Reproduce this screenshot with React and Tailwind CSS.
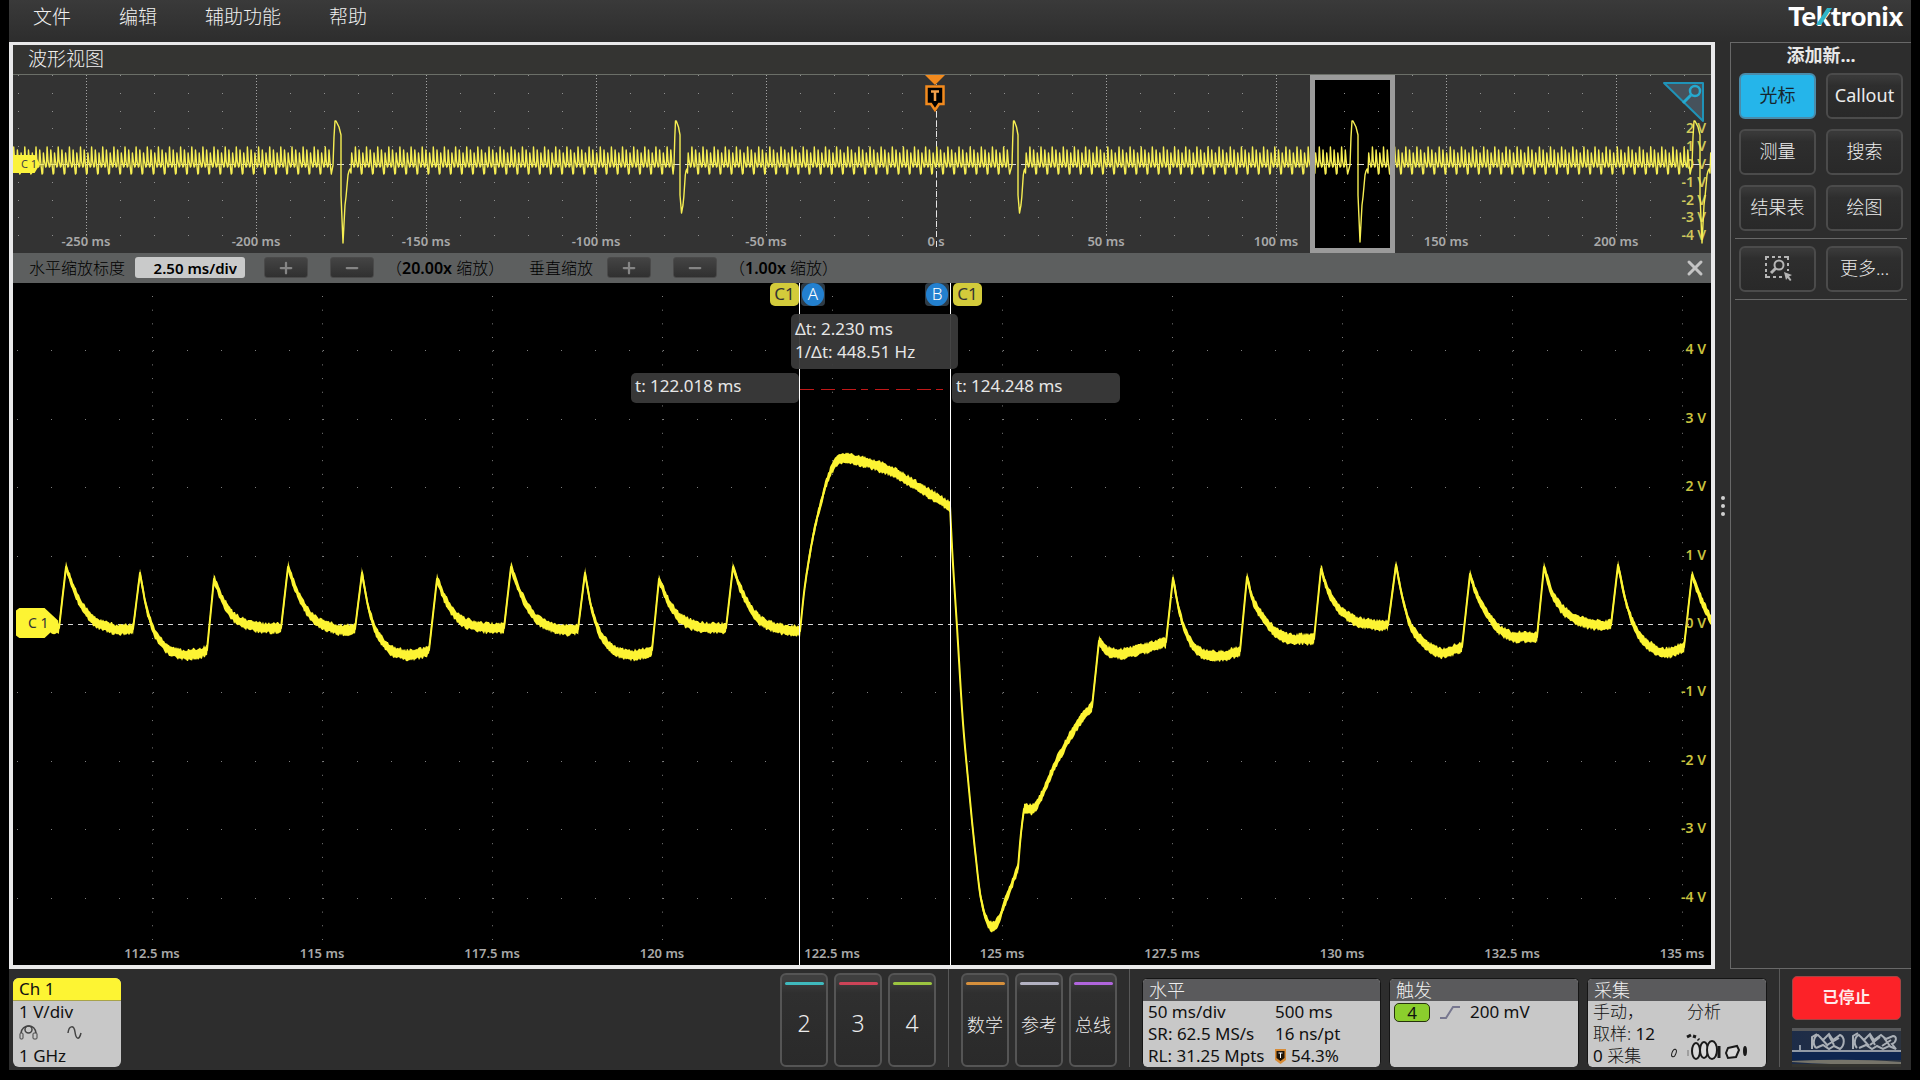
import React from "react";
import { Plus, Minus, X } from "lucide-react";

const PLOT_W = 1698;
const OVERVIEW_H = 178;
const ZOOM_H = 682;

const pctX = (x) => `${(x / PLOT_W) * 100}%`;
const pctY = (y, h) => `${(y / h) * 100}%`;

// smooth curve through a list of points, sampled once per pixel
const sample = (pts) => {
  const n = pts.length;
  const d = [];
  for (let i = 0; i < n - 1; i++) {
    d.push((pts[i + 1][1] - pts[i][1]) / (pts[i + 1][0] - pts[i][0]));
  }
  const m = pts.map((_, i) => {
    if (i === 0) return d[0];
    if (i === n - 1) return d[n - 2];
    if (d[i - 1] * d[i] <= 0) return 0;
    return (2 * d[i - 1] * d[i]) / (d[i - 1] + d[i]);
  });
  const out = [];
  for (let i = 0; i < n - 1; i++) {
    const [x0, y0] = pts[i];
    const [x1, y1] = pts[i + 1];
    const h = x1 - x0;
    for (let x = x0; x < x1; x += 1) {
      const t = (x - x0) / h;
      const t2 = t * t;
      const t3 = t2 * t;
      out.push([
        x,
        (2 * t3 - 3 * t2 + 1) * y0 + (t3 - 2 * t2 + t) * h * m[i] + (-2 * t3 + 3 * t2) * y1 + (t3 - t2) * h * m[i + 1],
      ]);
    }
  }
  out.push(pts[n - 1]);
  return out;
};

// decay shapes after each peak: [dx, y]
const decays = [
  [[0, 284], [7, 304], [15, 321], [28, 338], [41, 344], [54, 347], [67, 346]],
  [[0, 290], [7, 327], [17, 354], [33, 369], [47, 372], [60, 370], [67, 367]],
  [[0, 296], [9, 318], [22, 336], [38, 343], [52, 345], [67, 345]],
];

const segments = [[[35, 345], [46, 345]]];
let last = [46, 345];
for (let k = 0; k < 10; k++) {
  const px = Math.round(52.5 + k * 74.2);
  const seg = decays[k % 3].map(([dx, y]) => [px + dx, y]);
  segments.push([last, [px, seg[0][1]]], seg);
  last = seg[seg.length - 1];
}
last = [787, 348];
segments[segments.length - 1].pop();
segments[segments.length - 1].push(last);

const tail = [
  [[787, 348], [792, 302], [802, 244], [809, 216], [815, 195], [822, 181], [829, 175], [847, 178], [875, 187], [904, 203], [937, 223]],
  [[937, 223], [939, 264], [944, 344], [950, 440], [955, 496], [962, 567], [968, 616], [974, 638], [979, 644], [984, 640], [992, 619], [1005, 585]],
  [[1005, 585], [1008, 550], [1011, 526]],
  [[1011, 526], [1019, 526], [1029, 512], [1040, 486], [1057, 454], [1069, 435], [1079, 424]],
  [[1079, 424], [1086, 358]],
  [[1086, 358], [1094, 368], [1105, 371], [1130, 366], [1153, 359]],
  [[1153, 359], [1160, 295]],
  [[1160, 295], [1166, 327], [1173, 350], [1181, 364], [1194, 372], [1207, 373], [1227, 368]],
  [[1227, 368], [1234, 294]],
  [[1234, 294], [1240, 317], [1251, 336], [1264, 350], [1279, 356], [1301, 356]],
  [[1301, 356], [1308, 286]],
  [[1308, 286], [1316, 310], [1329, 329], [1346, 339], [1364, 342], [1375, 342]],
  [[1375, 342], [1383, 282]],
  [[1383, 282], [1390, 317], [1398, 344], [1411, 360], [1429, 370], [1449, 364]],
  [[1449, 364], [1457, 291]],
  [[1457, 291], [1463, 310], [1474, 331], [1487, 347], [1502, 354], [1524, 354]],
  [[1524, 354], [1531, 284]],
  [[1531, 284], [1539, 310], [1552, 329], [1567, 338], [1585, 342], [1598, 342]],
  [[1598, 342], [1605, 282]],
  [[1605, 282], [1613, 319], [1622, 345], [1635, 362], [1652, 370], [1671, 364]],
  [[1671, 364], [1679, 292]],
  [[1679, 292], [1687, 314], [1698, 337]],
];

const trace = [...segments, ...tail].flatMap(sample);

const noise = (i) => {
  const s = Math.sin(i * 127.1) * 43758.5453;
  return s - Math.floor(s);
};

const line = (pts) => "M" + pts.map(([x, y]) => `${x.toFixed(1)} ${y.toFixed(1)}`).join("L");

const band =
  line(trace.map(([x, y], i) => [x, y - 3.5 - noise(i) * 3])) +
  "L" +
  line(trace.map(([x, y], i) => [x, y + 3.5 + noise(i + 500) * 3]).reverse()).slice(1) +
  "Z";

// compressed record: short teeth broken by the large pulses [start, bottom, width factor]
const pulses = [
  [320, 168, 1],
  [661, 138, 0.75],
  [999, 138, 0.75],
  [1337, 167, 1],
  [1679, 168, 1],
];

const pulseShape = [[0, 90], [1, 62], [2, 46], [3, 46], [6, 52], [8, 60], [8, 120], [10, null], [12, 130], [13, 122], [15, 100], [16, 96], [17, 94]];

const overviewTrace = () => {
  const pts = [];
  let x = 0;
  let k = 0;
  let p = 0;
  while (x < PLOT_W) {
    if (p < pulses.length && x >= pulses[p][0] - 2) {
      const [s, bottom, f] = pulses[p];
      pulseShape.forEach(([dx, y]) => pts.push([s + dx * f, y === null ? bottom : Math.min(y, bottom)]));
      x = s + 18 * f;
      p += 1;
      continue;
    }
    const low = k % 3 === 1 ? 99 : 92;
    pts.push([x, k % 3 === 2 ? 98 : 91], [x + 0.7, 72 + (k % 3) * 3], [x + 1.6, 86], [x + 3, low]);
    x += 3.71;
    k += 1;
  }
  return line(pts);
};

const range = (a, b) => Array.from({ length: b - a + 1 }, (_, i) => a + i);

const OverviewPlot = () => (
  <svg className="block h-full w-full" viewBox={`0 0 ${PLOT_W} ${OVERVIEW_H}`} preserveAspectRatio="none" aria-hidden="true">
    <rect x="1300" y="3" width="80" height="172" fill="#000" />
    <g stroke="#8f8f8f" strokeWidth="1">
      {range(0, 9).map((i) => (
        <path key={i} d={`M5 ${0.5 + Math.round(i * 17.8)}H${PLOT_W}`} strokeDasharray="1 33" />
      ))}
      {range(0, 9).map((i) => (
        <path key={i} d={`M${73.5 + i * 170} 0V162`} stroke="#a5a5a5" strokeDasharray="1 2" />
      ))}
    </g>
    <path d={`M0 89.5H${PLOT_W}`} stroke="#d8d8d8" strokeDasharray="7 5" />
    <path d="M923.5 36V172" stroke="#e5e5e5" strokeDasharray="6 4" />
    <path d={overviewTrace()} fill="none" stroke="#f6ee52" strokeWidth="1.4" strokeLinejoin="round" />
    <rect x="1299.5" y="2.5" width="80" height="173" fill="none" stroke="#9b9b9b" strokeWidth="5" />
  </svg>
);

const ZoomPlot = () => (
  <svg className="block h-full w-full" viewBox={`0 0 ${PLOT_W} ${ZOOM_H}`} preserveAspectRatio="none" aria-hidden="true">
    <g stroke="#7d7d7d" strokeWidth="1">
      {range(-4, 4)
        .filter((v) => v !== 0)
        .map((v) => (
          <path key={v} d={`M4 ${Math.round(341 - v * 68.4) + 0.5}H1690`} strokeDasharray="1 33" />
        ))}
      {range(0, 9).map((i) => (
        <path key={i} d={`M${139.5 + i * 170} 13V660`} strokeDasharray="1 12.68" />
      ))}
    </g>
    <path d="M45 341.5H1676" stroke="#d6d6d6" strokeDasharray="5 5" />
    <path d="M787 106.5H934" stroke="#c01818" strokeDasharray="14 7 14 7 14 5 7 7" />
    <path d={band} fill="#fdf433" />
    <path d={line(trace)} fill="none" stroke="#fdf433" strokeWidth="2" strokeLinejoin="round" />
    <path d={`M786.5 0V${ZOOM_H}M937.5 0V${ZOOM_H}`} stroke="#fff" />
  </svg>
);

const TimeLabel = ({ x, y, children }) => (
  <span
    className="absolute -translate-x-1/2 -translate-y-1/2 whitespace-nowrap text-[13px] leading-4 font-semibold text-[#a9a9a9]"
    style={{ left: pctX(x), top: y }}
  >
    {children}
  </span>
);

const TriggerMark = ({ className }) => (
  <svg className={className} viewBox="0 0 20 37" aria-hidden="true">
    <path d="M0 0H20L10 10Z" fill="#f28a1e" />
    <path d="M1.5 11.5H18.5V29H14L10 35L6 29H1.5Z" fill="#000" stroke="#f28a1e" strokeWidth="2.5" />
    <path d="M6 16.5H14M10 16.5V26" stroke="#f2a04a" strokeWidth="2.5" />
  </svg>
);

const MenuBar = () => (
  <header className="flex h-[42px] shrink-0 items-start justify-between bg-linear-to-b from-[#3a3a3a] to-[#2d2d2d] pr-2 pl-6">
    <nav className="flex gap-12 pt-1">
      {["文件", "编辑", "辅助功能", "帮助"].map((m) => (
        <button key={m} type="button" className="text-[19px] leading-[26px] font-light text-[#f0f0f0]">
          {m}
        </button>
      ))}
    </nav>
    <div className="font-[Lato,sans-serif] text-[27px] leading-8 font-black text-white">
      Te
      <span className="relative">
        k
        <svg className="absolute top-[6px] left-0 h-[20px] w-[16px]" viewBox="0 0 16 20" aria-hidden="true">
          <path d="M11 3H16L5 20H0Z" fill="#2fb5c8" />
        </svg>
      </span>
      tronix
    </div>
  </header>
);

const ZoomButton = ({ label, children }) => (
  <button
    type="button"
    aria-label={label}
    className="flex h-[21px] w-11 items-center justify-center rounded-[3px] border border-[#4a4a4a] bg-linear-to-b from-[#444] to-[#303030] text-[#858585]"
  >
    {children}
  </button>
);

const ZoomBar = () => (
  <div className="flex h-[30px] shrink-0 items-center bg-[#5d5f5f] pb-px pl-4 text-[16px] leading-5 text-black">
    <label htmlFor="hscale" className="font-light">
      水平缩放标度
    </label>
    <input
      id="hscale"
      readOnly
      value="2.50 ms/div"
      className="ml-[10px] h-[21px] w-[110px] rounded-[3px] bg-[#c9caca] pr-2 text-right text-[15px] font-semibold"
    />
    <div className="ml-[19px] flex gap-[22px]">
      <ZoomButton label="水平放大"><Plus size={18} strokeWidth={3} /></ZoomButton>
      <ZoomButton label="水平缩小"><Minus size={18} strokeWidth={3} /></ZoomButton>
    </div>
    <span className="ml-3 w-[143px] font-light whitespace-nowrap">
      （<b className="font-semibold">20.00x</b> 缩放）
    </span>
    <span className="font-light">垂直缩放</span>
    <div className="ml-[14px] flex gap-[22px]">
      <ZoomButton label="垂直放大"><Plus size={18} strokeWidth={3} /></ZoomButton>
      <ZoomButton label="垂直缩小"><Minus size={18} strokeWidth={3} /></ZoomButton>
    </div>
    <span className="ml-3 font-light whitespace-nowrap">
      （<b className="font-semibold">1.00x</b> 缩放）
    </span>
    <button type="button" aria-label="关闭" className="mr-1 ml-auto text-[#c4c4c4]">
      <X size={24} strokeWidth={3} />
    </button>
  </div>
);

const Overview = () => (
  <div className="relative h-[178px] shrink-0 overflow-hidden bg-[#333]">
    <div className="absolute inset-0 text-[14px] leading-[18px] font-semibold text-[#d0c85a]">
      {[2, 1, 0, -1, -2, -3, -4].map((v) => (
        <span
          key={v}
          className="absolute right-[5px] flex w-7 -translate-y-1/2 justify-between"
          style={{ top: pctY(89 - v * 17.8, OVERVIEW_H) }}
        >
          <span className="w-4 text-right">{v}</span>
          <span>V</span>
        </span>
      ))}
    </div>
    <div className="absolute inset-0">
      <OverviewPlot />
    </div>
    {["-250 ms", "-200 ms", "-150 ms", "-100 ms", "-50 ms", "0 s", "50 ms", "100 ms", "150 ms", "200 ms"].map((t, i) => (
      <TimeLabel key={t} x={73 + i * 170} y={166}>
        {t}
      </TimeLabel>
    ))}
    <span className="absolute top-[80px] left-0 flex h-[18px] w-[27px] items-center bg-[#fbf23c] pl-2 text-[11px] leading-3 whitespace-nowrap text-[#444] [clip-path:polygon(0_0,80%_0,100%_50%,80%_100%,0_100%)]">
      C 1
    </span>
    <div className="absolute top-0 -translate-x-1/2" style={{ left: pctX(922) }}>
      <TriggerMark className="h-[37px] w-5" />
    </div>
    <svg className="absolute top-[6px] right-[5px] h-[43px] w-[45px]" viewBox="0 0 45 43" aria-hidden="true">
      <path d="M3 2H42V40Z" fill="#46525c" stroke="#1f93b8" strokeWidth="2" strokeLinejoin="round" />
      <circle cx="34" cy="10" r="5" fill="none" stroke="#25a9cf" strokeWidth="2.5" />
      <path d="M30 14L22 22" stroke="#25a9cf" strokeWidth="3" />
    </svg>
  </div>
);

const CursorReadout = ({ className, children, ...rest }) => (
  <div
    className={`absolute rounded-[5px] bg-[#3a3a3a]/95 text-[17px] leading-[23px] whitespace-nowrap text-[#e6e6e6] ${className}`}
    {...rest}
  >
    {children}
  </div>
);

const SourceTag = () => (
  <span className="flex h-[23px] w-[29px] items-center justify-center rounded-[5px] bg-[#d3cb3b] pb-[2px] text-[17px] leading-5 text-[#333]">C1</span>
);

const CursorTag = ({ children }) => (
  <span className="flex h-[23px] w-6 items-center justify-center rounded-[4px] bg-[#2f3c47]">
    <span className="flex h-[23px] w-[22px] items-center justify-center rounded-full bg-[#2380cf] pb-px text-[17px] leading-5 font-light text-white">{children}</span>
  </span>
);

const ZoomView = () => (
  <div className="relative min-h-0 flex-1 overflow-hidden bg-black">
    <div className="absolute inset-0">
      <ZoomPlot />
    </div>
    {[4, 3, 2, 1, 0, -1, -2, -3, -4].map((v) => (
      <span
        key={v}
        className="absolute right-[5px] -translate-y-1/2 text-[14px] leading-4 font-semibold text-[#c9c23e]"
        style={{ top: pctY(340 - v * 68.4, ZOOM_H) }}
      >
        {v} V
      </span>
    ))}
    {["112.5 ms", "115 ms", "117.5 ms", "120 ms", "122.5 ms", "125 ms", "127.5 ms", "130 ms", "132.5 ms", "135 ms"].map((t, i) => (
      <TimeLabel key={t} x={139 + i * 170} y={pctY(670, ZOOM_H)}>
        {t}
      </TimeLabel>
    ))}
    <span
      className="absolute left-[3px] flex h-[30px] w-[42px] -translate-y-1/2 items-center bg-[#fdf433] pl-3 text-[14px] leading-4 text-[#333] [clip-path:polygon(8%_0,68%_0,100%_42%,100%_58%,68%_100%,8%_100%,0_92%,0_8%)]"
      style={{ top: pctY(340, ZOOM_H) }}
    >
      C 1
    </span>
    <div className="absolute top-0 flex -translate-x-[30px] gap-[2px]" style={{ left: pctX(787) }}>
      <SourceTag />
      <CursorTag>A</CursorTag>
    </div>
    <div className="absolute top-0 flex -translate-x-[26px] gap-1" style={{ left: pctX(938) }}>
      <CursorTag>B</CursorTag>
      <SourceTag />
    </div>
    <CursorReadout className="top-[31px] h-[55px] w-[167px] pt-[3px] pl-1" style={{ left: pctX(778) }}>
      <p>Δt: 2.230 ms</p>
      <p>1/Δt: 448.51 Hz</p>
    </CursorReadout>
    <CursorReadout className="top-[90px] h-[30px] w-[168px] pt-[1px] pl-1" style={{ left: pctX(618) }}>
      t: 122.018 ms
    </CursorReadout>
    <CursorReadout className="top-[90px] h-[30px] w-[168px] pt-[1px] pl-1" style={{ left: pctX(939) }}>
      t: 124.248 ms
    </CursorReadout>
  </div>
);

const SideButton = ({ active, label, children }) => (
  <button
    type="button"
    aria-label={label}
    className={`flex h-[46px] items-center justify-center rounded-[6px] border-2 pb-[3px] text-[18px] leading-6 ${
      active ? "border-[#4a8cab] bg-[#25b5ea] font-normal text-[#17262e]" : "border-[#4b4b4b] bg-linear-to-b from-[#393939] from-5% via-[#2e2e2e] via-25% to-[#292929] text-[#ececec]"
    }`}
  >
    {children}
  </button>
);

const Sidebar = () => (
  <aside className="ml-[15px] flex w-[181px] shrink-0 flex-col border-y border-l border-[#686868] px-1">
    <h2 className="text-center text-[18px] leading-6 font-bold text-[#e8e8e8]">添加新...</h2>
    <div className="mt-[6px] grid grid-cols-2 gap-x-[10px] gap-y-[10px] px-1 pb-[7px] font-light">
      <SideButton active>光标</SideButton>
      <SideButton><span className="font-normal">Callout</span></SideButton>
      <SideButton>测量</SideButton>
      <SideButton>搜索</SideButton>
      <SideButton>结果表</SideButton>
      <SideButton>绘图</SideButton>
    </div>
    <div className="grid grid-cols-2 gap-x-[10px] border-y border-[#686868] px-1 py-[7px] font-light">
      <SideButton label="缩放">
        <svg className="h-7 w-7 text-[#b5b5b5]" viewBox="0 0 28 28" fill="none" stroke="currentColor" aria-hidden="true">
          <path d="M2 6V3H5M8 3H11M14 3H17M20 3H24V6M2 9V12M2 15V18M2 20V23H6M9 23H12M15 23H18M24 9V12M24 15V17" strokeWidth="2" />
          <circle cx="15" cy="11" r="4.5" strokeWidth="2" />
          <path d="M11.5 14.5L7 19" strokeWidth="3" />
          <path d="M20 18L28 21L25 22.5L27.5 26L26 27L23.5 24L22 26Z" fill="currentColor" stroke="none" />
        </svg>
      </SideButton>
      <SideButton>更多...</SideButton>
    </div>
  </aside>
);

const AddButton = ({ color, small, children }) => (
  <button
    type="button"
    className="flex h-[94px] w-12 flex-col items-center rounded-[6px] border-2 border-[#555] bg-linear-to-b from-[#3f3f3f] from-5% via-[#2f2f2f] via-20% to-[#2a2a2a] pt-[7px] text-[#ececec]"
  >
    <span className={`h-[3px] w-[39px] rounded-sm ${color}`} />
    <span className={`flex flex-1 items-center font-light ${small ? "text-[18px]" : "pb-1 text-[23px]"}`}>{children}</span>
  </button>
);

const Card = ({ title, className, children }) => (
  <section className={`h-[89px] rounded-[5px] border border-b-0 border-[#151515] bg-[#c8c8c8] text-[17px] leading-[22px] text-[#111] ${className}`}>
    <h3 className="h-[22px] rounded-t-[4px] bg-[#5a5a5c] pl-[6px] text-[18px] leading-[22px] font-light text-[#efefef]">{title}</h3>
    {children}
  </section>
);

const Divider = () => <span className="h-full w-px bg-[#585858]" />;

const BottomBar = () => (
  <footer className="flex h-[101px] shrink-0 items-end gap-3 pr-[10px] pb-[3px] pl-1">
    <section className="mr-auto h-[89px] w-[108px] overflow-hidden rounded-[6px] bg-[#c8c8c8] text-[17px] leading-[22px] text-[#111]">
      <h3 className="h-[23px] border-b border-[#a8a34a] bg-[#fdf433] pl-[6px]">Ch 1</h3>
      <p className="pl-[6px]">1 V/div</p>
      <svg className="mt-px ml-[6px] h-[21px] w-16" viewBox="0 0 64 21" fill="none" stroke="#444" aria-hidden="true">
        <path d="M2 9C3 3 7 2 10 2S16 3 17 9" strokeWidth="1.5" />
        <circle cx="9.5" cy="5.5" r="3.5" strokeWidth="1.5" />
        <rect x="1" y="9" width="3" height="6" rx="1" />
        <rect x="14" y="9" width="4" height="6" rx="1" />
        <path d="M49 9C50 1 55 1 56 8S60 17 62 9" strokeWidth="1.5" />
      </svg>
      <p className="pl-[6px]">1 GHz</p>
    </section>

    <div className="flex gap-[6px]">
      <AddButton color="bg-[#3fb9bd]">2</AddButton>
      <AddButton color="bg-[#cc4458]">3</AddButton>
      <AddButton color="bg-[#9bc440]">4</AddButton>
    </div>
    <Divider />
    <div className="flex gap-[6px]">
      <AddButton small color="bg-[#d58f3c]">数学</AddButton>
      <AddButton small color="bg-[#b3b2c2]">参考</AddButton>
      <AddButton small color="bg-[#b065dc]">总线</AddButton>
    </div>
    <Divider />

    <div className="flex gap-2">
      <Card title="水平" className="w-[239px]">
        <div className="grid grid-cols-[127px_1fr] pl-[5px] whitespace-nowrap">
          <span>50 ms/div</span>
          <span>500 ms</span>
          <span>SR: 62.5 MS/s</span>
          <span>16 ns/pt</span>
          <span>RL: 31.25 Mpts</span>
          <span className="flex items-center gap-[5px]">
            <svg className="h-4 w-[11px]" viewBox="0 0 11 16" aria-hidden="true">
              <path d="M0 1H11V12L5.5 16L0 12Z" fill="#d88b35" />
              <path d="M1.5 3H9.5V10L5.5 13L1.5 10Z" fill="#1c140a" />
              <path d="M3.5 5H7.5M5.5 5V10" stroke="#fff" />
            </svg>
            54.3%
          </span>
        </div>
      </Card>
      <Card title="触发" className="w-[190px]">
        <div className="flex items-center pl-1">
          <span className="mt-px flex h-[19px] w-9 items-center justify-center rounded-[5px] border border-[#26330d] bg-[#8bce2d] leading-4">4</span>
          <svg className="ml-[10px] h-[15px] w-5" viewBox="0 0 20 15" fill="none" stroke="#77778f" strokeWidth="2" aria-hidden="true">
            <path d="M0 13H6L13 2H20" />
          </svg>
          <span className="ml-[10px]">200 mV</span>
        </div>
      </Card>
      <Card title="采集" className="w-[180px]">
        <div className="relative grid grid-cols-[94px_1fr] pl-[5px] font-light whitespace-nowrap">
          <span>手动，</span>
          <span>分析</span>
          <span className="col-span-2">取样: <span className="font-normal">12</span></span>
          <span className="col-span-2"><span className="font-normal">0</span> 采集</span>
          <svg className="absolute right-3 bottom-[3px] h-10 w-[88px]" viewBox="0 0 88 40" fill="none" stroke="#1a1a1a" aria-hidden="true">
            <ellipse cx="8" cy="29" rx="2" ry="4" transform="rotate(20 8 29)" />
            <path d="M21 13l4-2M27 12l3 1M32 15l1 1" strokeWidth="3" />
            <path d="M22 26v6" stroke="#777" />
            <g fill="#d9d9d9" strokeWidth="2">
              <ellipse cx="30" cy="27" rx="4" ry="8" />
              <ellipse cx="38" cy="26" rx="4" ry="8" />
              <ellipse cx="46" cy="26" rx="5" ry="9" />
              <path d="M62 24l9-2 2 4-3 7-8 1-2-5Z" />
            </g>
            <path d="M53 22v12" strokeWidth="3" />
            <ellipse cx="79" cy="27" rx="1" ry="4" strokeWidth="2" />
          </svg>
        </div>
      </Card>
    </div>
    <Divider />

    <div className="flex h-[91px] w-[109px] flex-col gap-2">
      <button type="button" className="h-11 shrink-0 rounded-[5px] border border-[#a34545] bg-[#fc2228] pb-[2px] text-[16px] leading-6 font-bold text-[#ffe9e9]">
        已停止
      </button>
      <svg className="h-[39px] w-full" viewBox="0 0 109 39" fill="none" aria-hidden="true">
        <defs>
          <linearGradient id="strip" x1="0" x2="1">
            <stop offset="0" stopColor="#1d2c48" />
            <stop offset="1" stopColor="#2c3440" />
          </linearGradient>
        </defs>
        <rect width="109" height="39" fill="url(#strip)" />
        <rect width="109" height="3" fill="#57585a" />
        <rect y="24" width="109" height="8" fill="#0e2650" />
        <path d="M0 33Q60 30 109 34V36Q60 38 0 34Z" fill="#76746a" />
        <path d="M0 36H109V39H0Z" fill="#33332f" />
        <path d="M0 23H109M8 22v-5" stroke="#b8bec6" strokeWidth="1.5" />
        <path
          d="M20 21V9l5-3M24 20c-4-4-2-12 2-13l5 5 6-6 4 6 7-5c5 2 5 10 0 14l-6-3-5 3-6-4-7 3M28 9l8 9M37 8l5 9M47 10l-12 7M61 21V8l5-3M65 20c-4-4-2-12 2-13l5 5 6-6 4 6 7-5 5 4 7-3c4 0 4 6-1 8l4 5-7-3-6 3-6-3-5 3-6-4-7 3M69 9l8 9M78 8l5 9M88 9l-10 8M92 10l6 8M99 12l-9 6"
          stroke="#a9afb6"
          strokeWidth="2"
        />
      </svg>
    </div>
  </footer>
);

export default function App() {
  return (
    <div className="h-screen min-w-[1500px] overflow-hidden bg-black px-[9px] pb-[10px] font-['Noto_Sans','Noto_Sans_CJK_SC',sans-serif]">
      <div className="flex h-full flex-col bg-[#2d2d2d]">
        <MenuBar />
        <div className="flex min-h-0 flex-1">
          <main className="flex min-w-0 flex-1 flex-col border-4 border-t-[3px] border-[#e9e9ea]">
            <h1 className="h-[30px] shrink-0 border-b border-[#6b6f68] bg-[#343432] pl-[15px] text-[19px] leading-[29px] font-light text-[#f0f0f0]">
              波形视图
            </h1>
            <Overview />
            <ZoomBar />
            <ZoomView />
          </main>
          <div className="relative">
            <span className="absolute top-1/2 left-[6px] flex -translate-y-1/2 flex-col gap-1">
              <i className="size-1 rounded-full bg-[#d0d0d0]" />
              <i className="size-1 rounded-full bg-[#d0d0d0]" />
              <i className="size-1 rounded-full bg-[#d0d0d0]" />
            </span>
          </div>
          <Sidebar />
        </div>
        <BottomBar />
      </div>
    </div>
  );
}
